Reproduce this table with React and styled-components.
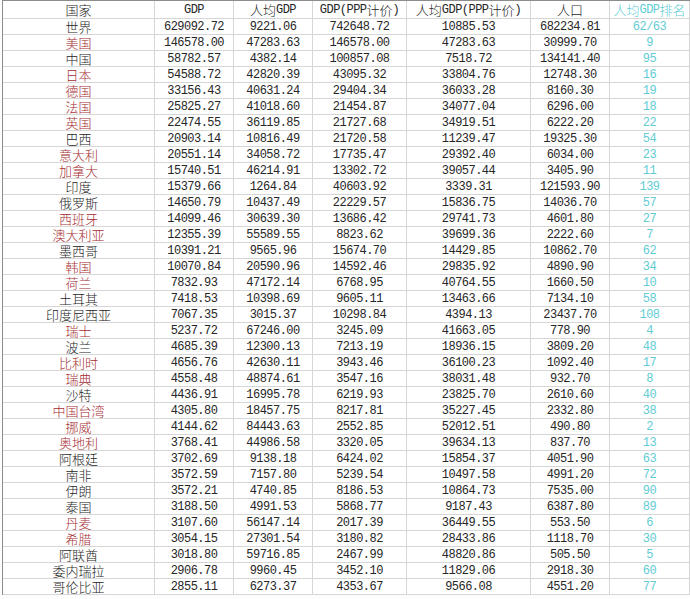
import React from "react";
import styled, { createGlobalStyle } from "styled-components";

const Global = createGlobalStyle`
  html, body { margin: 0; padding: 0; background: #fdfdfd; }
  body { width: 690px; height: 599px; overflow: hidden; }
`;

const Page = styled.div`
  padding-left: 2px;
  background: #fdfdfd;
`;

const Sheet = styled.div`
  display: grid;
  grid-template-columns: 152px 79px 79px 94px 124px 79px 80px;
  border-top: 1px solid #8c8c8c;
  border-left: 1px solid #8c8c8c;
  background: #ffffff;
`;

const Cell = styled.div`
  box-sizing: border-box;
  height: ${(p) => (p.$head ? 18 : 16)}px;
  border-right: 1px solid #d6d6d6;
  border-bottom: 1px solid #d6d6d6;
  display: flex;
  align-items: center;
  justify-content: center;
  white-space: nowrap;
  color: ${(p) => (p.$tone === "red" ? "#a52d31" : p.$tone === "cyan" ? "#62ccd4" : "#262626")};
  font-family: ${(p) => (p.$cjk ? '"Noto Sans CJK SC", sans-serif' : '"Liberation Mono", monospace')};
  font-size: ${(p) => (p.$cjk ? "13px" : "12px")};
  font-weight: ${(p) => (p.$cjk ? 300 : 400)};
  letter-spacing: ${(p) => (p.$cjk ? "0" : "-0.53px")};
  line-height: 16px;
  padding-top: ${(p) => (p.$head ? 1 : 0)}px;
`;

const Latin = styled.span`
  font-family: "Liberation Mono", monospace;
  font-size: 12px;
  font-weight: 400;
  letter-spacing: -0.53px;
`;

const Han = styled.span`
  font-family: "Noto Sans CJK SC", sans-serif;
  font-size: 13px;
  font-weight: 300;
`;

function Mixed({ text }) {
  const parts = text.split(/([\x00-\x7f]+)/).filter(Boolean);
  return parts.map((s, i) =>
    /^[\x00-\x7f]+$/.test(s) ? <Latin key={i}>{s}</Latin> : <Han key={i}>{s}</Han>
  );
}

const headers = ["国家", "GDP", "人均GDP", "GDP(PPP计价)", "人均GDP(PPP计价)", "人口", "人均GDP排名"];

const rows = [
  ["世界", "629092.72", "9221.06", "742648.72", "10885.53", "682234.81", "62/63", 0],
  ["美国", "146578.00", "47283.63", "146578.00", "47283.63", "30999.70", "9", 1],
  ["中国", "58782.57", "4382.14", "100857.08", "7518.72", "134141.40", "95", 0],
  ["日本", "54588.72", "42820.39", "43095.32", "33804.76", "12748.30", "16", 1],
  ["德国", "33156.43", "40631.24", "29404.34", "36033.28", "8160.30", "19", 1],
  ["法国", "25825.27", "41018.60", "21454.87", "34077.04", "6296.00", "18", 1],
  ["英国", "22474.55", "36119.85", "21727.68", "34919.51", "6222.20", "22", 1],
  ["巴西", "20903.14", "10816.49", "21720.58", "11239.47", "19325.30", "54", 0],
  ["意大利", "20551.14", "34058.72", "17735.47", "29392.40", "6034.00", "23", 1],
  ["加拿大", "15740.51", "46214.91", "13302.72", "39057.44", "3405.90", "11", 1],
  ["印度", "15379.66", "1264.84", "40603.92", "3339.31", "121593.90", "139", 0],
  ["俄罗斯", "14650.79", "10437.49", "22229.57", "15836.75", "14036.70", "57", 0],
  ["西班牙", "14099.46", "30639.30", "13686.42", "29741.73", "4601.80", "27", 1],
  ["澳大利亚", "12355.39", "55589.55", "8823.62", "39699.36", "2222.60", "7", 1],
  ["墨西哥", "10391.21", "9565.96", "15674.70", "14429.85", "10862.70", "62", 0],
  ["韩国", "10070.84", "20590.96", "14592.46", "29835.92", "4890.90", "34", 1],
  ["荷兰", "7832.93", "47172.14", "6768.95", "40764.55", "1660.50", "10", 1],
  ["土耳其", "7418.53", "10398.69", "9605.11", "13463.66", "7134.10", "58", 0],
  ["印度尼西亚", "7067.35", "3015.37", "10298.84", "4394.13", "23437.70", "108", 0],
  ["瑞士", "5237.72", "67246.00", "3245.09", "41663.05", "778.90", "4", 1],
  ["波兰", "4685.39", "12300.13", "7213.19", "18936.15", "3809.20", "48", 0],
  ["比利时", "4656.76", "42630.11", "3943.46", "36100.23", "1092.40", "17", 1],
  ["瑞典", "4558.48", "48874.61", "3547.16", "38031.48", "932.70", "8", 1],
  ["沙特", "4436.91", "16995.78", "6219.93", "23825.70", "2610.60", "40", 0],
  ["中国台湾", "4305.80", "18457.75", "8217.81", "35227.45", "2332.80", "38", 1],
  ["挪威", "4144.62", "84443.63", "2552.85", "52012.51", "490.80", "2", 1],
  ["奥地利", "3768.41", "44986.58", "3320.05", "39634.13", "837.70", "13", 1],
  ["阿根廷", "3702.69", "9138.18", "6424.02", "15854.37", "4051.90", "63", 0],
  ["南非", "3572.59", "7157.80", "5239.54", "10497.58", "4991.20", "72", 0],
  ["伊朗", "3572.21", "4740.85", "8186.53", "10864.73", "7535.00", "90", 0],
  ["泰国", "3188.50", "4991.53", "5868.77", "9187.43", "6387.80", "89", 0],
  ["丹麦", "3107.60", "56147.14", "2017.39", "36449.55", "553.50", "6", 1],
  ["希腊", "3054.15", "27301.54", "3180.82", "28433.86", "1118.70", "30", 1],
  ["阿联酋", "3018.80", "59716.85", "2467.99", "48820.86", "505.50", "5", 0],
  ["委内瑞拉", "2906.78", "9960.45", "3452.10", "11829.06", "2918.30", "60", 0],
  ["哥伦比亚", "2855.11", "6273.37", "4353.67", "9566.08", "4551.20", "77", 0],
];

export default function App() {
  return (
    <Page>
      <Global />
      <Sheet>
        {headers.map((h, i) => (
          <Cell key={h} $head $cjk $tone={i === 6 ? "cyan" : "dark"}>
            <Mixed text={h} />
          </Cell>
        ))}
        {rows.map((r) => (
          <React.Fragment key={r[0]}>
            <Cell $cjk $tone={r[7] ? "red" : "dark"}>{r[0]}</Cell>
            {r.slice(1, 6).map((v, i) => (
              <Cell key={i}>{v}</Cell>
            ))}
            <Cell $tone="cyan">{r[6]}</Cell>
          </React.Fragment>
        ))}
      </Sheet>
    </Page>
  );
}
